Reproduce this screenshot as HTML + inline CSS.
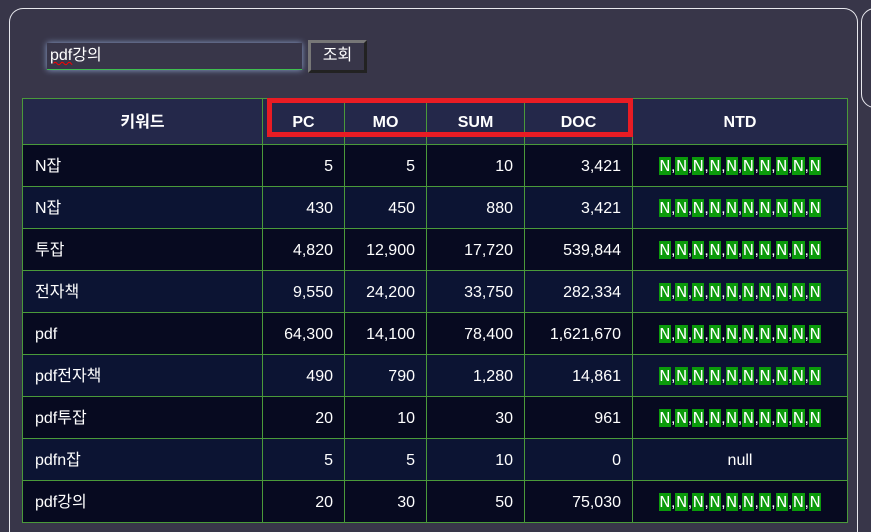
<!DOCTYPE html>
<html><head><meta charset="utf-8"><style>
html,body{margin:0;width:871px;height:532px;overflow:hidden}
body{background:#383649;font-family:"Liberation Sans","Noto Sans CJK KR",sans-serif;position:relative}
.panel{position:absolute;left:9px;top:8px;width:849px;height:530px;border:1px solid #e8e8ee;border-bottom:none;border-radius:14px 14px 0 0;box-sizing:border-box}
.panel2{position:absolute;left:861px;top:8px;width:40px;height:98px;border:1px solid #e8e8ee;border-radius:14px}
.inp{position:absolute;left:47px;top:43px;width:255px;height:27px;background:#383649;border-bottom:1px solid #3fbf4f;box-shadow:0 0 6px #8fa5d0;color:#fff;font-size:16px;line-height:26px;padding-left:3px;box-sizing:border-box}
.inp span{text-decoration:underline wavy red;text-decoration-thickness:1px}
.btn{position:absolute;left:308px;top:40px;width:59px;height:33px;box-sizing:border-box;background:#383649;border:3px solid;border-color:#777 #222 #222 #777;color:#fff;font-size:16px;text-align:center;line-height:26px}
table{position:absolute;left:22px;top:98px;border-collapse:collapse;color:#fff;font-size:16px;line-height:18px}
td,th{border:1px solid #4a9a3a;padding:0}
th{background:#24284a;height:43px;font-weight:bold;padding-top:2px}
td{height:39px;padding-top:2px}
tr:nth-child(even) td{background:#070a20}
tr:nth-child(odd) td{background:#0c1433}
td.n{text-align:right;padding-right:11px}
td.k{padding-left:12px}
td.t{text-align:center}
.g{background:#0b9a0b;font-family:"DejaVu Sans",sans-serif;font-size:15px;padding:0 0.5px}
.red{position:absolute;left:267px;top:98px;width:366px;height:39px;border:5px solid #e81c24;box-sizing:border-box}
</style></head><body>
<div class="panel"></div><div class="panel2"></div>
<div class="inp"><span>pdf</span>강의</div>
<div class="btn">조회</div>
<table>
<tr><th style="width:239px">키워드</th><th style="width:81px">PC</th><th style="width:81px">MO</th><th style="width:97px">SUM</th><th style="width:107px">DOC</th><th style="width:214px">NTD</th></tr>
<tr><td class="k">N잡</td><td class="n">5</td><td class="n">5</td><td class="n">10</td><td class="n">3,421</td><td class="t">NT</td></tr>
<tr><td class="k">N잡</td><td class="n">430</td><td class="n">450</td><td class="n">880</td><td class="n">3,421</td><td class="t">NT</td></tr>
<tr><td class="k">투잡</td><td class="n">4,820</td><td class="n">12,900</td><td class="n">17,720</td><td class="n">539,844</td><td class="t">NT</td></tr>
<tr><td class="k">전자책</td><td class="n">9,550</td><td class="n">24,200</td><td class="n">33,750</td><td class="n">282,334</td><td class="t">NT</td></tr>
<tr><td class="k">pdf</td><td class="n">64,300</td><td class="n">14,100</td><td class="n">78,400</td><td class="n">1,621,670</td><td class="t">NT</td></tr>
<tr><td class="k">pdf전자책</td><td class="n">490</td><td class="n">790</td><td class="n">1,280</td><td class="n">14,861</td><td class="t">NT</td></tr>
<tr><td class="k">pdf투잡</td><td class="n">20</td><td class="n">10</td><td class="n">30</td><td class="n">961</td><td class="t">NT</td></tr>
<tr><td class="k">pdfn잡</td><td class="n">5</td><td class="n">5</td><td class="n">10</td><td class="n">0</td><td class="t">null</td></tr>
<tr><td class="k">pdf강의</td><td class="n">20</td><td class="n">30</td><td class="n">50</td><td class="n">75,030</td><td class="t">NT</td></tr>
</table>
<div class="red"></div>
<script>
document.querySelectorAll('td.t').forEach(function(t){if(t.textContent=='NT'){var a=[];for(var i=0;i<10;i++)a.push('<span class="g">N</span>');t.innerHTML=a.join(',');}});
</script>
</body></html>
